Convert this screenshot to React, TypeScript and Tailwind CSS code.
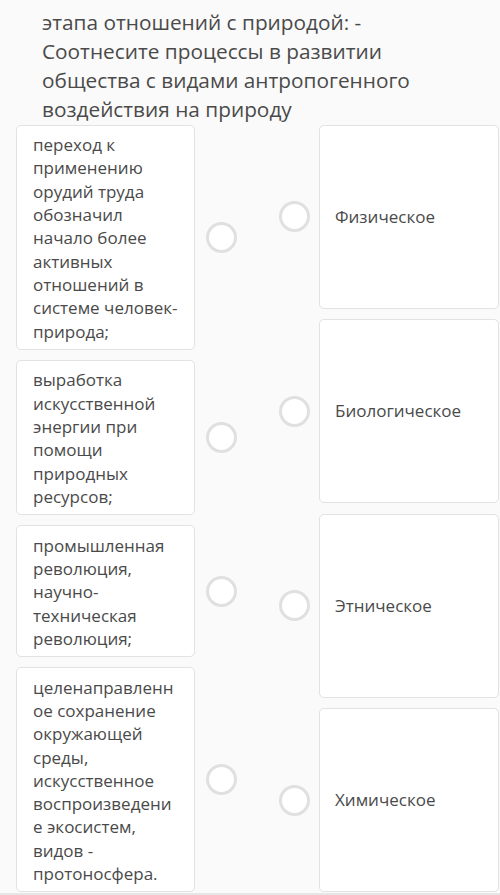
import React from "react";

const left = [
  "переход к применению орудий труда обозначил начало более активных отношений в системе человек-природа;",
  "выработка искусственной энергии при помощи природных ресурсов;",
  "промышленная революция, научно-техническая революция;",
  "целенаправленное сохранение окружающей среды, искусственное воспроизведение экосистем, видов - протоносфера.",
];

const right = ["Физическое", "Биологическое", "Этническое", "Химическое"];

function Circle() {
  return (
    <div className="w-[31px] h-[31px] shrink-0 rounded-full border-[3px] border-[#e0e0e0] bg-white" />
  );
}

export default function App() {
  return (
    <div
      className="w-[500px] h-[895px] overflow-hidden bg-[#fafafa] text-[#4a4a4a]"
      style={{ fontFamily: '"Open Sans", "Noto Sans", sans-serif' }}
    >
      <div className="pl-[42px] pr-[30px] pt-[7.5px]">
        <p className="max-w-[425px] text-[20.8px] leading-[29.3px]">
          этапа отношений с природой: - Соотнесите процессы в развитии общества с видами антропогенного воздействия на природу
        </p>
      </div>
      <div className="flex pl-[16px]">
        <div className="flex flex-col gap-[10px] w-[221px]">
          {left.map((t, i) => (
            <div key={i} className="flex items-center">
              <div className="w-[179px] shrink-0 bg-white border border-[#e2e2e2] rounded-[5px] pl-[16px] pr-[14px] pt-[7.5px] pb-[6px] text-[17px] leading-[23.3px] break-words [overflow-wrap:anywhere]">
                {t}
              </div>
              <div className="ml-[11px]">
                <Circle />
              </div>
            </div>
          ))}
        </div>
        <div className="flex flex-col gap-[10.5px] ml-[42px]">
          {right.map((t, i) => (
            <div key={i} className="flex items-center">
              <Circle />
              <div className="ml-[9px] w-[180px] h-[184px] bg-white border border-[#e2e2e2] rounded-[5px] pl-[15px] flex items-center text-[17px]">
                {t}
              </div>
            </div>
          ))}
        </div>
      </div>
      <div className="mt-[1px] h-[2px] bg-[#e6e6e6]" />
    </div>
  );
}
